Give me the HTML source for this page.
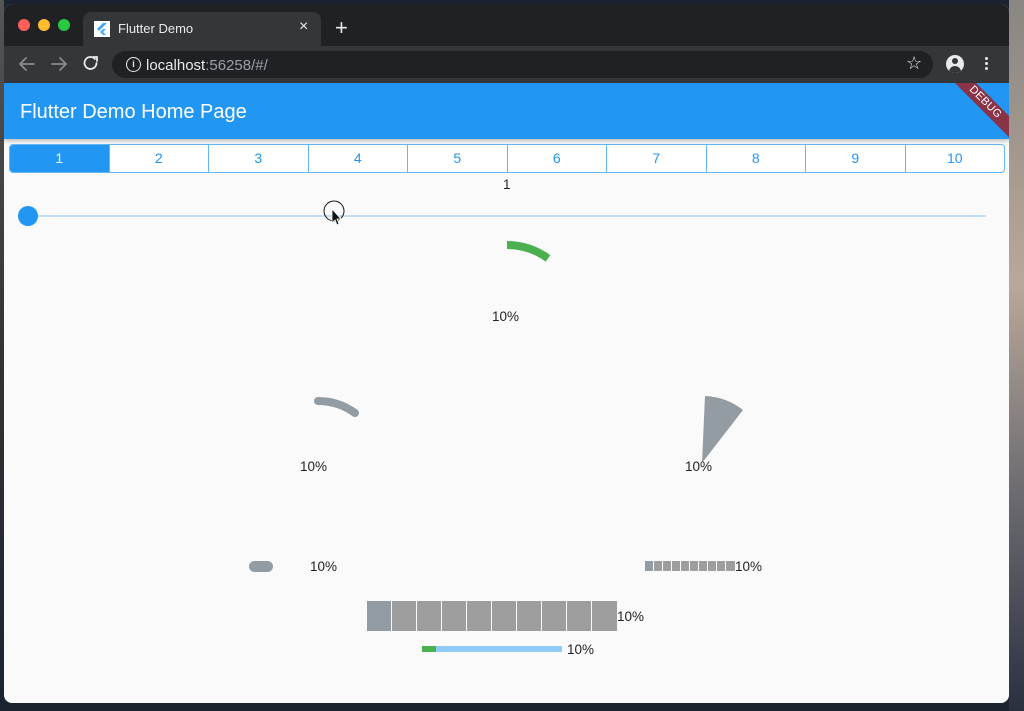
<!DOCTYPE html>
<html><head><meta charset="utf-8"><style>
*{margin:0;padding:0;box-sizing:border-box}
body{width:1024px;height:711px;overflow:hidden;position:relative;background:#1b2230;font-family:"Liberation Sans",Arial,sans-serif}
.abs{position:absolute}
.win{left:4px;top:4px;width:1005px;height:699px;border-radius:8px;overflow:hidden;background:#fafafa}
.t{font-size:13.5px;color:#222;position:absolute}
</style></head><body>
<div class="abs" style="left:1009px;top:0;width:15px;height:711px;background:linear-gradient(#8a8682,#b9a89a 40%,#6b6a70 70%,#2a3040)"></div>
<div class="abs" style="left:0;top:0;width:4px;height:711px;background:linear-gradient(#555,#333 50%,#1b2230)"></div>
<div class="abs win">
  <div class="abs" style="left:0;top:0;width:1005px;height:42px;background:#202124"></div>
  <div class="abs" style="left:14px;top:15px;width:12px;height:12px;border-radius:50%;background:#fe5f57"></div>
  <div class="abs" style="left:34px;top:15px;width:12px;height:12px;border-radius:50%;background:#febc2e"></div>
  <div class="abs" style="left:54px;top:15px;width:12px;height:12px;border-radius:50%;background:#28c840"></div>
  <div class="abs" style="left:79px;top:8px;width:238px;height:36px;background:#35363a;border-radius:8px 8px 0 0"></div>
  <div class="abs" style="left:90px;top:17px;width:16px;height:16px;background:#fff"><svg width="16" height="16"><path d="M9 2L3 8l2 2 8-8z M9 8l-3 3 3 3h3l-3-3 3-3z" fill="#42a5f5"/></svg></div>
  <div class="abs" style="left:114px;top:17px;font-size:13px;color:#e8eaed">Flutter Demo</div>
  <div class="abs" style="left:295px;top:14px;font-size:16px;color:#e8eaed">×</div>
  <div class="abs" style="left:331px;top:11px;font-size:22px;color:#e8eaed;font-weight:300">+</div>
  <div class="abs" style="left:0;top:42px;width:1005px;height:37px;background:#35363a"></div>
  <svg class="abs" style="left:0;top:42px" width="120" height="37"><g stroke-width="1.8" fill="none" stroke-linecap="round"><path d="M30 18H16M22 12l-6 6 6 6" stroke="#8a8b8e"/><path d="M48 18h14M56 12l6 6-6 6" stroke="#8a8b8e"/><path d="M91 13a6 6 0 1 0 1.5 4" stroke="#e8eaed"/><path d="M89 11h4v4" stroke="#e8eaed"/></g></svg>
  <div class="abs" style="left:108px;top:47px;width:821px;height:27px;border-radius:14px;background:#202124"></div>
  <div class="abs" style="left:122px;top:53px;width:15px;height:15px;border:1.6px solid #e8eaed;border-radius:50%;color:#e8eaed;font-size:9px;text-align:center;line-height:12px;font-weight:bold">i</div>
  <div class="abs" style="left:142px;top:53px;font-size:15px;color:#e8eaed">localhost<span style="color:#9aa0a6">:56258/#/</span></div>
  <div class="abs" style="left:902px;top:49px;font-size:18px;color:#e8eaed">☆</div>
  <div class="abs" style="left:942px;top:51px;width:18px;height:18px;border-radius:50%;background:#e8eaed;overflow:hidden"><div class="abs" style="left:6px;top:3px;width:6px;height:6px;border-radius:50%;background:#35363a"></div><div class="abs" style="left:3px;top:11px;width:12px;height:8px;border-radius:6px 6px 0 0;background:#35363a"></div></div>
  <div class="abs" style="left:981px;top:53px;width:3px;height:3px;border-radius:50%;background:#e8eaed;box-shadow:0 5px 0 #e8eaed,0 10px 0 #e8eaed"></div>
  <div class="abs" style="left:0;top:79px;width:1005px;height:56px;background:#2196f3;box-shadow:0 2px 4px rgba(0,0,0,.25)"></div>
  <div class="abs" style="left:16px;top:97px;font-size:20px;color:#fff">Flutter Demo Home Page</div>
  <div class="abs" style="left:0;top:79px;width:1005px;height:60px;overflow:hidden">
    <div class="abs" style="left:921px;top:12px;width:120px;height:15px;background:#8b3346;transform:rotate(45deg);color:#fff;font-size:11px;text-align:center;line-height:15px;letter-spacing:.3px">DEBUG</div>
  </div>
  <div class="abs" style="left:5px;top:140px;width:996px;height:29px;border:1px solid #64b5f6;border-radius:4px;display:flex;overflow:hidden;background:#fff">
    <div style="flex:1;background:#2196f3;color:#fff;font-size:14px;text-align:center;line-height:27px">1</div>
    <div style="flex:1;color:#2196f3;font-size:14px;text-align:center;line-height:27px;border-left:1px solid #64b5f6">2</div>
    <div style="flex:1;color:#2196f3;font-size:14px;text-align:center;line-height:27px;border-left:1px solid #64b5f6">3</div>
    <div style="flex:1;color:#2196f3;font-size:14px;text-align:center;line-height:27px;border-left:1px solid #64b5f6">4</div>
    <div style="flex:1;color:#2196f3;font-size:14px;text-align:center;line-height:27px;border-left:1px solid #64b5f6">5</div>
    <div style="flex:1;color:#2196f3;font-size:14px;text-align:center;line-height:27px;border-left:1px solid #64b5f6">6</div>
    <div style="flex:1;color:#2196f3;font-size:14px;text-align:center;line-height:27px;border-left:1px solid #64b5f6">7</div>
    <div style="flex:1;color:#2196f3;font-size:14px;text-align:center;line-height:27px;border-left:1px solid #64b5f6">8</div>
    <div style="flex:1;color:#2196f3;font-size:14px;text-align:center;line-height:27px;border-left:1px solid #64b5f6">9</div>
    <div style="flex:1;color:#2196f3;font-size:14px;text-align:center;line-height:27px;border-left:1px solid #64b5f6">10</div>
  </div>
</div>
<div class="t" style="left:503px;top:177px">1</div>
<div class="abs" style="left:28px;top:215px;width:958px;height:2px;background:#c4e0f8"></div>
<div class="abs" style="left:18px;top:206px;width:20px;height:20px;border-radius:50%;background:#2196f3"></div>
<svg class="abs" style="left:0;top:0" width="1024" height="711">
<circle cx="334" cy="211" r="10" fill="none" stroke="#111" stroke-width="1"/>
<path d="M332 209v14l3-3 2 5 2-1-2-5h4z" fill="#111" stroke="#fff" stroke-width=".8"/>
<path d="M507 245A70 70 0 0 1 548 258.4" fill="none" stroke="#4caf50" stroke-width="8"/>
<path d="M318 401A63 63 0 0 1 355 413" fill="none" stroke="#939ca3" stroke-width="8" stroke-linecap="round"/>
<path d="M702 463L705 396A66 66 0 0 1 743 410Z" fill="#939ca3"/>
<rect x="249" y="561" width="24" height="11" rx="5.5" fill="#939ca3"/>
<g fill="#9e9e9e"><rect x="645" y="561" width="8" height="10" fill="#939ca3"/><rect x="654" y="561" width="8" height="10"/><rect x="663" y="561" width="8" height="10"/><rect x="672" y="561" width="8" height="10"/><rect x="681" y="561" width="8" height="10"/><rect x="690" y="561" width="8" height="10"/><rect x="699" y="561" width="8" height="10"/><rect x="708" y="561" width="8" height="10"/><rect x="717" y="561" width="8" height="10"/><rect x="726" y="561" width="9" height="10"/></g>
<g fill="#9e9e9e"><rect x="367" y="601" width="24" height="30" fill="#939ca3"/><rect x="392" y="601" width="24" height="30"/><rect x="417" y="601" width="24" height="30"/><rect x="442" y="601" width="24" height="30"/><rect x="467" y="601" width="24" height="30"/><rect x="492" y="601" width="24" height="30"/><rect x="517" y="601" width="24" height="30"/><rect x="542" y="601" width="24" height="30"/><rect x="567" y="601" width="24" height="30"/><rect x="592" y="601" width="25" height="30"/></g>
<rect x="422" y="646" width="140" height="6" fill="#90caf9"/><rect x="422" y="646" width="14" height="6" fill="#4caf50"/>
</svg>
<div class="t" style="left:492px;top:309px">10%</div>
<div class="t" style="left:300px;top:459px">10%</div>
<div class="t" style="left:685px;top:459px">10%</div>
<div class="t" style="left:310px;top:559px">10%</div>
<div class="t" style="left:735px;top:559px">10%</div>
<div class="t" style="left:617px;top:609px">10%</div>
<div class="t" style="left:567px;top:642px">10%</div>
</body></html>
